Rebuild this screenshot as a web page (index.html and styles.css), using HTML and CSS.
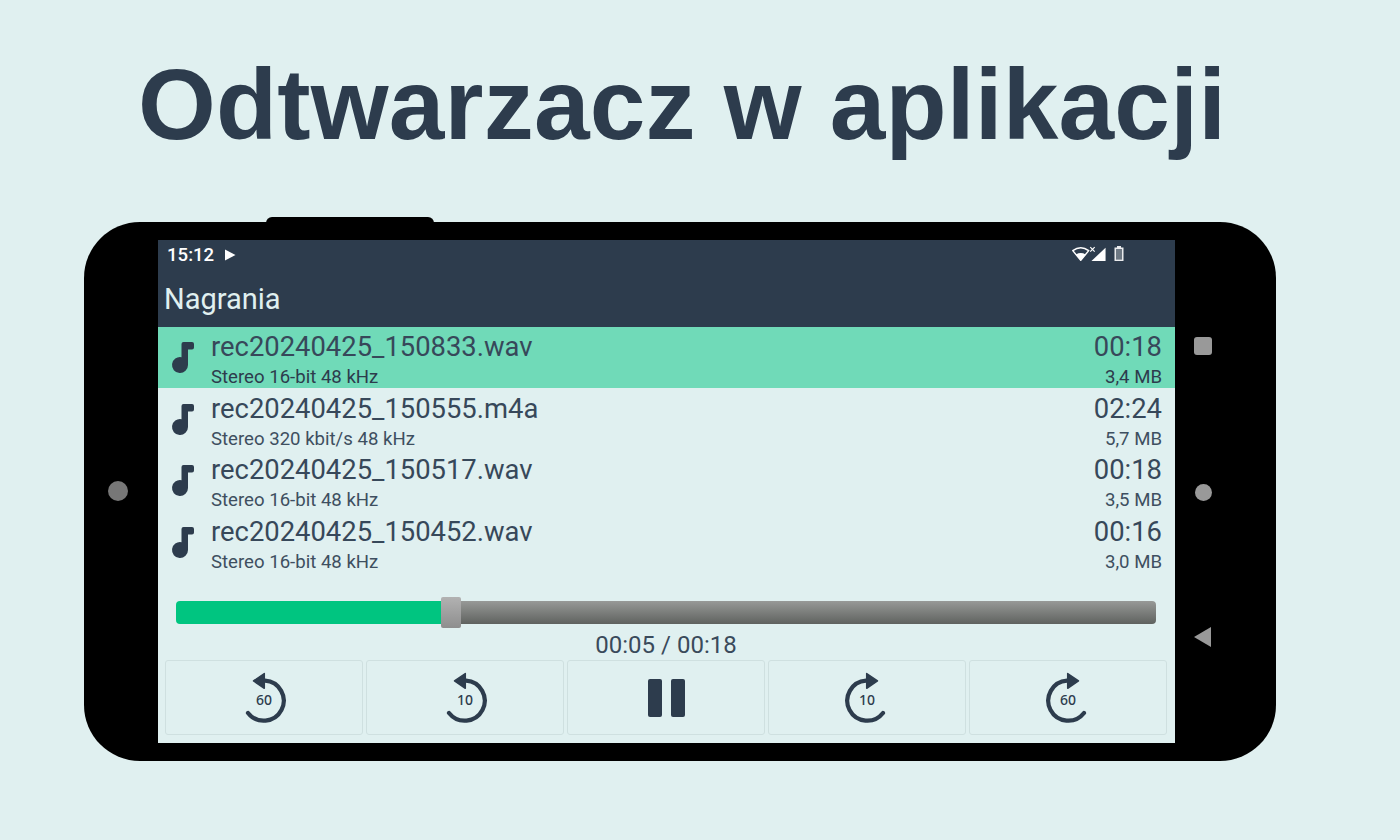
FILE: index.html
```html
<!DOCTYPE html>
<html lang="pl">
<head>
<meta charset="utf-8">
<title>Odtwarzacz w aplikacji</title>
<link rel="stylesheet" href="styles.css">
</head>
<body>
<svg class="defs" width="0" height="0" aria-hidden="true">
  <symbol id="note" viewBox="0 0 26 34">
    <path d="M11.500 3 Q11.500 1 13.500 1 H22 Q24 1 24 3 V6.500 Q24 8.500 22 8.500 H18 V24 A8 8 0 1 1 11.500 16.200 Z" fill="currentColor"/>
  </symbol>
  <symbol id="back" viewBox="0 0 48 56">
    <path d="M25 10.700 A20 20 0 1 1 8 43" fill="none" stroke="currentColor" stroke-width="4.200" stroke-linecap="round"/>
    <path d="M24.300 3.500 V18.300 L13.500 10.900 Z" fill="currentColor" stroke="currentColor" stroke-width="1.500" stroke-linejoin="round"/>
  </symbol>
  <symbol id="forward" viewBox="0 0 48 56">
    <path d="M23 10.700 A20 20 0 1 0 40 43" fill="none" stroke="currentColor" stroke-width="4.200" stroke-linecap="round"/>
    <path d="M23.700 3.500 V18.300 L34.500 10.900 Z" fill="currentColor" stroke="currentColor" stroke-width="1.500" stroke-linejoin="round"/>
  </symbol>
</svg>

<h1 class="headline">Odtwarzacz w aplikacji</h1>

<div class="phone">
  <div class="bump"></div>
  <div class="side side-left"><span class="camera"></span></div>
  <main class="screen">
    <header class="bar">
      <div class="status">
        <span class="clock">15:12</span>
        <svg class="play-mini" viewBox="0 0 12 12"><path d="M1 0.500 L11.500 6 L1 11.500 Z" fill="currentColor"/></svg>
        <span class="status-fill"></span>
        <svg class="net" viewBox="0 0 36 16">
          <path d="M9 14.500 L0.800 4.500 Q9 -1.500 17.200 4.500 Z" fill="none" stroke="currentColor" stroke-width="1.500" stroke-linejoin="round"/>
          <path d="M9 14.500 L4 8.500 Q9 5.500 14 8.500 Z" fill="currentColor"/>
          <path d="M18.800 1 L23.300 5.500 M23.300 1 L18.800 5.500" stroke="currentColor" stroke-width="1.200"/>
          <path d="M34.500 1.500 V15.200 H20 Z" fill="currentColor"/>
        </svg>
        <svg class="battery" viewBox="0 0 10 15">
          <path d="M3 0 H7 V1.500 H9.500 V15 H0.500 V1.500 H3 Z M2 3 V13.500 H8 V3 Z" fill="currentColor" fill-rule="evenodd"/>
          <rect x="2" y="3" width="6" height="10.500" fill="currentColor" opacity="0.350"/>
        </svg>
      </div>
      <div class="appbar">Nagrania</div>
    </header>

    <ul class="list">
      <li class="row row-active">
        <svg class="note"><use href="#note"/></svg>
        <div class="info"><div class="name">rec20240425_150833.wav</div><div class="meta">Stereo 16-bit 48 kHz</div></div>
        <div class="nums"><div class="dur">00:18</div><div class="size">3,4 MB</div></div>
      </li>
      <li class="row">
        <svg class="note"><use href="#note"/></svg>
        <div class="info"><div class="name">rec20240425_150555.m4a</div><div class="meta">Stereo 320 kbit/s 48 kHz</div></div>
        <div class="nums"><div class="dur">02:24</div><div class="size">5,7 MB</div></div>
      </li>
      <li class="row">
        <svg class="note"><use href="#note"/></svg>
        <div class="info"><div class="name">rec20240425_150517.wav</div><div class="meta">Stereo 16-bit 48 kHz</div></div>
        <div class="nums"><div class="dur">00:18</div><div class="size">3,5 MB</div></div>
      </li>
      <li class="row">
        <svg class="note"><use href="#note"/></svg>
        <div class="info"><div class="name">rec20240425_150452.wav</div><div class="meta">Stereo 16-bit 48 kHz</div></div>
        <div class="nums"><div class="dur">00:16</div><div class="size">3,0 MB</div></div>
      </li>
    </ul>

    <section class="player">
      <div class="track">
        <div class="track-done" style="width: 27%"></div>
        <div class="thumb"></div>
        <div class="track-rest"></div>
      </div>
      <div class="time">00:05 / 00:18</div>
      <div class="controls">
        <button class="ctl"><span class="seek"><svg class="seek-icon"><use href="#back"/></svg><span class="seek-num">60</span></span></button>
        <button class="ctl"><span class="seek"><svg class="seek-icon"><use href="#back"/></svg><span class="seek-num">10</span></span></button>
        <button class="ctl"><span class="pause"><span class="pause-bar"></span><span class="pause-bar"></span></span></button>
        <button class="ctl"><span class="seek"><svg class="seek-icon"><use href="#forward"/></svg><span class="seek-num">10</span></span></button>
        <button class="ctl"><span class="seek"><svg class="seek-icon"><use href="#forward"/></svg><span class="seek-num">60</span></span></button>
      </div>
    </section>
  </main>
  <div class="side side-right">
    <span class="nav-square"></span>
    <span class="nav-circle"></span>
    <span class="nav-triangle"></span>
  </div>
</div>
</body>
</html>
```
FILE: styles.css
```css
* { box-sizing: border-box; }
html, body { margin: 0; height: 100%; }
body {
  background: #e0f0f0;
  overflow: hidden;
  font-family: Roboto, "Liberation Sans", sans-serif;
  color: #2d3c4d;
}
.defs { position: absolute; }
.headline {
  margin: 0;
  height: 222px;
  padding: 42px 0 0 138px;
  font: bold 100px/124px "Liberation Sans", Arial, sans-serif;
  letter-spacing: 0.200px;
  color: #2d3c4d;
  white-space: nowrap;
}
.phone {
  position: relative;
  margin-left: 84px;
  width: 1192px;
  height: 539px;
  background: #000;
  border-radius: 56px;
  display: flex;
}
.bump {
  position: absolute;
  left: 182px;
  top: -5px;
  width: 168px;
  height: 6px;
  background: #000;
  border-radius: 6px 6px 0 0;
}
.side { display: flex; flex-direction: column; align-items: center; }
.side-left { width: 74px; justify-content: center; }
.side-right { width: 101px; padding: 115px 45px 0 0; }
.camera { width: 20px; height: 20px; border-radius: 50%; background: #777; margin-right: 6px; margin-top: -2px; }
.nav-square { width: 18px; height: 18px; border-radius: 3px; background: #999; }
.nav-circle { width: 17px; height: 17px; border-radius: 50%; background: #999; margin-top: 129px; }
.nav-triangle {
  width: 0; height: 0; margin: 126px 2px 0 0;
  border-style: solid;
  border-width: 10px 17px 10px 0;
  border-color: transparent #999 transparent transparent;
}
.screen {
  width: 1017px;
  height: 503px;
  margin-top: 18px;
  background: #e0f0f0;
  display: flex;
  flex-direction: column;
}
.bar { height: 86.500px; background: #2d3c4d; color: #e0f0f0; flex: none; }
.status { display: flex; align-items: center; height: 30px; padding: 0 51px 0 9px; color: #fff; }
.clock { font-size: 18.600px; font-weight: 500; line-height: 30px; }
.play-mini { width: 12px; height: 12px; margin-left: 10px; }
.status-fill { flex: 1; }
.net { width: 35px; height: 16px; display: block; margin-top: -3px; }
.battery { width: 10px; height: 15px; margin: -3px 0 0 7px; opacity: .9; }
.appbar { font-size: 29px; line-height: 38px; padding: 10px 0 0 6px; }
.list { list-style: none; margin: 0; padding: 0; flex: none; }
.row {
  height: 61.500px;
  display: flex;
  align-items: stretch;
  padding: 0 13px 0 0;
}
.row-active { background: #70dab8; }
.note { width: 26px; height: 34px; margin: 14.500px 0 0 12px; flex: none; }
.info { margin-left: 15px; flex: 1; }
.name, .dur { font-size: 27.400px; line-height: 34px; margin-top: 3.500px; color: #37485a; }
.meta, .size { font-size: 18.600px; line-height: 22px; margin-top: 2px; color: #3e4f60; }
.row-active .meta, .row-active .size { color: #2d3c4d; }
.nums { text-align: right; }
.player { padding: 0 8px 0 7px; flex: none; }
.track {
  margin: 28.500px 11px 0;
  height: 23px;
  display: flex;
  align-items: center;
}
.track-done { height: 23px; background: #00c580; border-radius: 4px 0 0 4px; }
.thumb {
  width: 20px; height: 31px; flex: none; border-radius: 2px;
  background: linear-gradient(#b2b2b2, #8e8e8e);
}
.track-rest {
  flex: 1; height: 23px; border-radius: 0 4px 4px 0;
  background: linear-gradient(#979997, #5f625f);
}
.time { text-align: center; font-size: 24px; line-height: 30px; margin-top: 6px; color: #3a4a5b; }
.controls { display: flex; gap: 3px; margin-top: 0; height: 75px; }
.ctl {
  flex: 1;
  background: #e0f0f0;
  border: 1.500px solid #cfe0e0;
  border-radius: 3px;
  padding: 0;
  display: flex;
  align-items: center;
  justify-content: center;
  color: #2d3c4d;
}
.seek { position: relative; width: 48px; height: 56px; display: block; }
.seek-icon { width: 48px; height: 56px; display: block; }
.seek-num {
  position: absolute;
  left: 0; right: 0; top: 21px;
  text-align: center;
  font: 500 14px/18px "Noto Sans", Roboto, sans-serif;
}
.pause { display: flex; gap: 9px; }
.pause-bar { width: 14px; height: 38px; background: #2d3c4d; border-radius: 2px; }
```
